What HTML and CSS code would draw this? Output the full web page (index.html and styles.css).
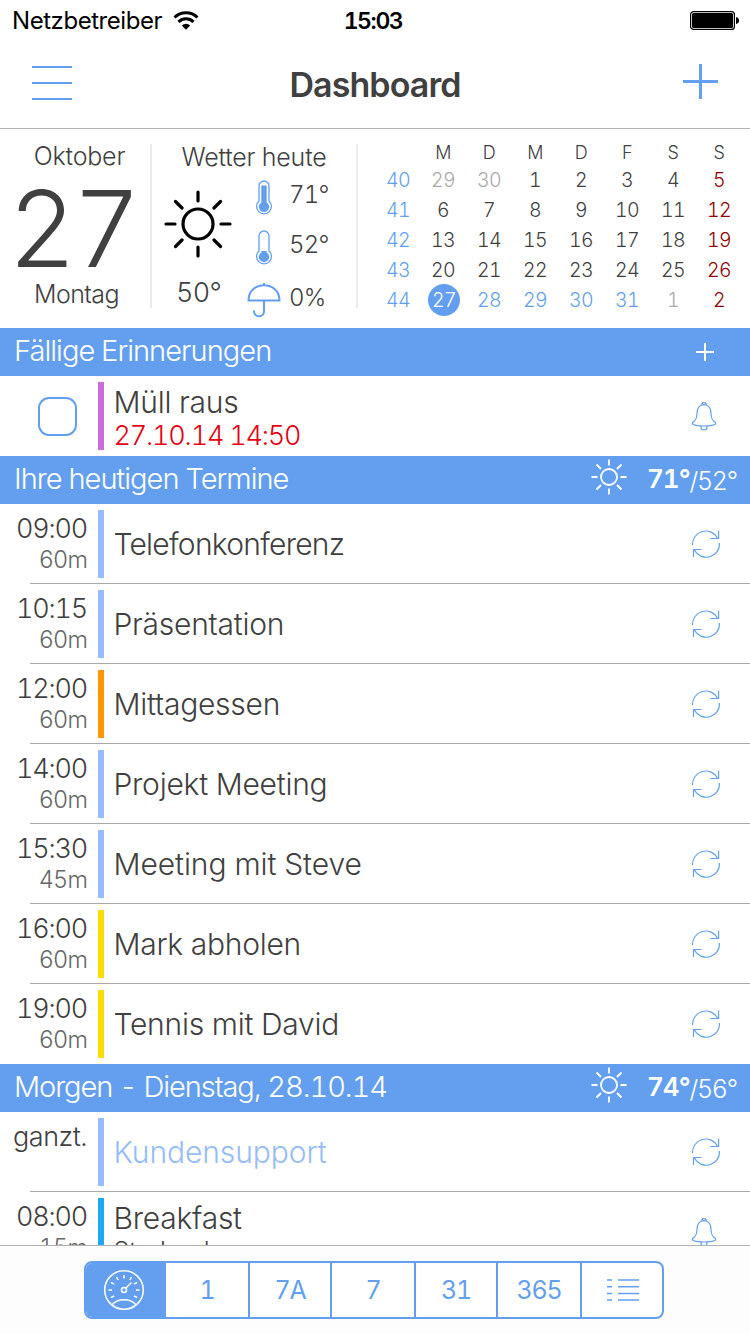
FILE: index.html
```html
<!DOCTYPE html>
<html lang="de">
<head>
    <meta charset="utf-8">
    <title>Dashboard</title>
    <link rel="stylesheet" href="styles.css">
</head>
<body>
    <svg class="symbols" width="0" height="0">
        <symbol id="repeat" viewBox="0 0 30 30">
            <path d="M1.5 16 A13.3 13.3 0 0 1 26.6 9.2 M27.6 1.5 V9.5 H19.5 M28.5 14 A13.3 13.3 0 0 1 3.4 21 M2.5 28 V20.5 H10.5"/>
        </symbol>
        <symbol id="bell" viewBox="0 0 26 30">
            <path d="M10.8 4 A2.2 2.4 0 0 1 15.2 4 C18.8 5.2 19.8 8.2 20 12 C20.2 17.5 21 19 23.5 20.8 C25.8 22.7 24.5 23.8 21 24.3 C16 25.2 10 25.2 5 24.3 C1.5 23.8 .2 22.7 2.5 20.8 C5 19 5.8 17.5 6 12 C6.2 8.2 7.2 5.2 10.8 4 Z M10 25 V26 A3 3 0 0 0 16 26 V25 M10.8 4 Q13 3.3 15.2 4"/>
        </symbol>
        <symbol id="sun" viewBox="0 0 36 36">
            <circle cx="18" cy="18" r="8"/>
            <path d="M18 .5V6.5M18 29.5V35.5M.5 18H6.5M29.5 18H35.5M5.5 5.5L10 10M26 26L30.5 30.5M5.5 30.5L10 26M26 10L30.5 5.5"/>
        </symbol>
    </svg>

    <div class="status-bar">
        <div class="carrier">
            <span>Netzbetreiber</span>
            <svg width="26" height="20" viewBox="0 0 26 20">
                <path d="M1.5 6.5 A16.5 16.5 0 0 1 24.5 6.5" fill="none" stroke="#000" stroke-width="3"/>
                <path d="M5.5 10.8 A10.8 10.8 0 0 1 20.5 10.8" fill="none" stroke="#000" stroke-width="3"/>
                <path d="M13 18.8 L8.8 14.5 A6 6 0 0 1 17.2 14.5 Z"/>
            </svg>
        </div>
        <span class="clock">15:03</span>
        <svg class="battery" width="50" height="20" viewBox="0 0 50 20">
            <rect x=".6" y=".6" width="43.8" height="17.8" rx="3" fill="none" stroke="#000" stroke-width="1.2"/>
            <rect x="2" y="2" width="41" height="15" rx="1.5"/>
            <path d="M46 6 Q49 6.5 49 9.5 Q49 12.5 46 13 Z"/>
        </svg>
    </div>

    <div class="nav-bar">
        <div class="menu"><i></i><i></i><i></i></div>
        <h1>Dashboard</h1>
        <svg class="add" width="36" height="36" viewBox="0 0 36 36">
            <path d="M18.5 0V35M1 17.5H36"/>
        </svg>
    </div>

    <div class="summary">
        <div class="today">
            <div class="month">Oktober</div>
            <div class="day">27</div>
            <div class="weekday">Montag</div>
        </div>
        <div class="weather">
            <div class="weather-title">Wetter heute</div>
            <div class="weather-body">
                <div class="now">
                    <svg width="68" height="68" viewBox="0 0 68 68">
                        <circle cx="34" cy="34" r="15"/>
                        <path d="M34 2V11M34 57V66M2 34H11M57 34H66M11.5 11.5L18 18M50 50L56.5 56.5M11.5 56.5L18 50M50 18L56.5 11.5"/>
                    </svg>
                    <span>50°</span>
                </div>
                <div class="details">
                    <div>
                        <svg width="34" height="36" viewBox="0 0 34 36">
                            <path class="line" d="M12 22V7A5 5 0 0 1 22 7V22A7.4 7.4 0 1 1 12 22Z"/>
                            <path class="fill" d="M14.3 23.5V6.5H19.7V23.5A5.2 5.2 0 1 1 14.3 23.5Z"/>
                        </svg>
                        <span>71°</span>
                    </div>
                    <div>
                        <svg width="34" height="36" viewBox="0 0 34 36">
                            <path class="line" d="M12 22V7A5 5 0 0 1 22 7V22A7.4 7.4 0 1 1 12 22Z"/>
                            <path class="fill" d="M14.3 23.5V22H19.7V23.5A5.2 5.2 0 1 1 14.3 23.5Z"/>
                        </svg>
                        <span>52°</span>
                    </div>
                    <div class="rain">
                        <svg width="34" height="36" viewBox="0 0 34 36">
                            <path class="umbrella" d="M17 1V3M1.5 18.5C1.5 -2 32.5 -2 32.5 18.5ZM17 18.5V29.5A5 4.7 0 0 1 7 29.5V28.5"/>
                        </svg>
                        <span>0%</span>
                    </div>
                </div>
            </div>
        </div>
        <table class="calendar">
            <tr><th></th><th>M</th><th>D</th><th>M</th><th>D</th><th>F</th><th>S</th><th>S</th></tr>
            <tr><td class="week">40</td><td class="gray">29</td><td class="gray">30</td><td>1</td><td>2</td><td>3</td><td>4</td><td class="red">5</td></tr>
            <tr><td class="week">41</td><td>6</td><td>7</td><td>8</td><td>9</td><td>10</td><td>11</td><td class="red">12</td></tr>
            <tr><td class="week">42</td><td>13</td><td>14</td><td>15</td><td>16</td><td>17</td><td>18</td><td class="red">19</td></tr>
            <tr><td class="week">43</td><td>20</td><td>21</td><td>22</td><td>23</td><td>24</td><td>25</td><td class="red">26</td></tr>
            <tr><td class="week">44</td><td><span class="current">27</span></td><td class="blue">28</td><td class="blue">29</td><td class="blue">30</td><td class="blue">31</td><td class="gray">1</td><td class="red">2</td></tr>
        </table>
    </div>

    <div class="list">
        <div class="section">
            <h2>Fällige Erinnerungen</h2>
            <svg class="section-add" width="20" height="20" viewBox="0 0 20 20"><path d="M10 1V19M1 10H19"/></svg>
        </div>
        <div class="row">
            <div class="check"><span></span></div>
            <div class="bar purple"></div>
            <div class="text two-lines"><div class="title">Müll raus</div><div class="due">27.10.14 14:50</div></div>
            <svg class="icon bell"><use href="#bell"/></svg>
        </div>

        <div class="section">
            <h2>Ihre heutigen Termine</h2>
            <svg class="sun"><use href="#sun"/></svg>
            <div class="temps"><b>71°</b><span>/52°</span></div>
        </div>
        <div class="row line">
            <div class="time">09:00<small>60m</small></div>
            <div class="bar lightblue"></div>
            <div class="text"><div class="title tight">Telefonkonferenz</div></div>
            <svg class="icon"><use href="#repeat"/></svg>
        </div>
        <div class="row line">
            <div class="time">10:15<small>60m</small></div>
            <div class="bar lightblue"></div>
            <div class="text"><div class="title">Präsentation</div></div>
            <svg class="icon"><use href="#repeat"/></svg>
        </div>
        <div class="row line">
            <div class="time">12:00<small>60m</small></div>
            <div class="bar orange"></div>
            <div class="text"><div class="title">Mittagessen</div></div>
            <svg class="icon"><use href="#repeat"/></svg>
        </div>
        <div class="row line">
            <div class="time">14:00<small>60m</small></div>
            <div class="bar lightblue"></div>
            <div class="text"><div class="title">Projekt Meeting</div></div>
            <svg class="icon"><use href="#repeat"/></svg>
        </div>
        <div class="row line">
            <div class="time">15:30<small>45m</small></div>
            <div class="bar lightblue"></div>
            <div class="text"><div class="title loose">Meeting mit Steve</div></div>
            <svg class="icon"><use href="#repeat"/></svg>
        </div>
        <div class="row line">
            <div class="time">16:00<small>60m</small></div>
            <div class="bar yellow"></div>
            <div class="text"><div class="title">Mark abholen</div></div>
            <svg class="icon"><use href="#repeat"/></svg>
        </div>
        <div class="row">
            <div class="time">19:00<small>60m</small></div>
            <div class="bar yellow"></div>
            <div class="text"><div class="title">Tennis mit David</div></div>
            <svg class="icon"><use href="#repeat"/></svg>
        </div>

        <div class="section">
            <h2 class="date">Morgen - Dienstag, 28.10.14</h2>
            <svg class="sun"><use href="#sun"/></svg>
            <div class="temps"><b>74°</b><span>/56°</span></div>
        </div>
        <div class="row line">
            <div class="time allday-label">ganzt.</div>
            <div class="bar lightblue"></div>
            <div class="text"><div class="title loose allday">Kundensupport</div></div>
            <svg class="icon"><use href="#repeat"/></svg>
        </div>
        <div class="row">
            <div class="time">08:00<small>15m</small></div>
            <div class="bar cyan"></div>
            <div class="text two-lines"><div class="title">Breakfast</div><div class="place">Starbucks</div></div>
            <svg class="icon bell"><use href="#bell"/></svg>
        </div>
    </div>

    <div class="tab-bar">
        <div class="tabs">
            <div class="tab active">
                <svg width="42" height="42" viewBox="0 0 42 42">
                    <circle cx="21" cy="21" r="19.3"/>
                    <circle cx="21" cy="21" r="2.5"/>
                    <path d="M23 19L28.5 13.5M21 6V9.5M13.5 8L15.2 11M28.5 8L26.8 11M8 13.5L11 15.2M34 13.5L31 15.2M5.5 21H9M33 21H36.5M8 28.5L11 26.8M34 28.5L31 26.8M9 36C14 29 28 29 33 36"/>
                </svg>
            </div>
            <div class="tab">1</div>
            <div class="tab">7A</div>
            <div class="tab">7</div>
            <div class="tab">31</div>
            <div class="tab">365</div>
            <div class="tab">
                <svg width="34" height="24" viewBox="0 0 34 24">
                    <path d="M2 2H7M13 2H34M2 8.7H7M13 8.7H34M2 15.4H7M13 15.4H34M2 22H7M13 22H34"/>
                </svg>
            </div>
        </div>
    </div>
</body>
</html>
```
FILE: styles.css
```css
* {
    box-sizing: border-box;
}

body, h1, h2 {
    margin: 0;
    padding: 0;
}

body {
    display: flex;
    flex-direction: column;
    width: 750px;
    height: 1334px;
    overflow: hidden;
    background-color: #fff;
    color: #404040;
    font-family: Inter, "Liberation Sans", sans-serif;
    font-weight: 300;
    font-variant-numeric: tabular-nums;
}

svg {
    display: block;
    flex: none;
}

.symbols {
    display: none;
}

.status-bar {
    display: grid;
    grid-template-columns: 1fr 66px 1fr;
    align-items: center;
    height: 40px;
    padding: 0 10px 0 12px;
    color: #000;
    font-size: 24px;
    line-height: 40px;
}

.carrier {
    display: flex;
    align-items: center;
    gap: 11px;
    font-weight: 400;
    letter-spacing: -0.45px;
}

.carrier span, .clock {
    padding-top: 1px;
}

.clock {
    padding-right: 6px;
    font-weight: 600;
    font-size: 23px;
    letter-spacing: -1.4px;
    text-align: center;
}

.battery {
    justify-self: end;
}

.nav-bar {
    display: flex;
    justify-content: space-between;
    align-items: center;
    height: 89px;
    padding: 0 32px 2px;
    border-bottom: 1px solid #b2b2b2;
}

.menu {
    display: flex;
    flex-direction: column;
    gap: 14px;
    width: 40px;
}

.menu i {
    height: 2px;
    background-color: #649fef;
}

.nav-bar h1 {
    padding: 2px 4px 0 0;
    font-size: 34px;
    font-weight: 600;
    letter-spacing: -0.9px;
}

.add {
    margin-bottom: 3px;
    fill: none;
    stroke: #649fef;
    stroke-width: 3;
}

.summary {
    display: flex;
    height: 199px;
    padding-top: 15px;
}

.today {
    width: 152px;
    height: 164px;
    border-right: 2px solid #ebebeb;
    text-align: center;
}

.month, .weekday, .weather-title {
    font-size: 25px;
    line-height: 24px;
    letter-spacing: -0.2px;
}

.month {
    padding-left: 9px;
}

.weekday {
    padding-left: 3px;
    letter-spacing: -0.6px;
}

.day {
    height: 114px;
    padding-right: 5px;
    font-size: 106px;
    font-weight: 300;
    line-height: 122px;
    letter-spacing: -4px;
}

.weather {
    width: 206px;
    height: 164px;
    border-right: 2px solid #ebebeb;
}

.weather-title {
    padding-top: 1px;
    text-align: center;
}

.weather-body {
    display: flex;
    padding-left: 12px;
}

.now {
    width: 76px;
    padding-top: 21px;
    font-size: 27px;
    line-height: 32px;
    letter-spacing: -0.7px;
}

.now svg {
    margin-bottom: 19px;
    fill: none;
    stroke: #000;
    stroke-width: 3.2;
    stroke-linecap: round;
}

.now span {
    padding-left: 12px;
}

.details {
    padding: 10px 0 0 7px;
    font-size: 24px;
}

.details div {
    display: flex;
    gap: 8px;
    height: 50px;
    line-height: 32px;
    letter-spacing: -0.8px;
}

.details .line, .details .umbrella {
    fill: none;
    stroke: #649fef;
    stroke-width: 1.3;
}

.details .umbrella {
    stroke-width: 2;
}

.details .fill {
    fill: #649fef;
}

.details .rain {
    padding-top: 3px;
}

.calendar {
    width: 368px;
    height: 174px;
    margin: -3px 0 0 16px;
    border-collapse: collapse;
    table-layout: fixed;
    font-size: 19.5px;
    letter-spacing: -0.6px;
}

.calendar th, .calendar td {
    height: 30px;
    padding: 0;
    font-weight: 300;
    line-height: 29px;
    text-align: center;
}

.calendar th {
    height: 24px;
    font-size: 18px;
    line-height: 24px;
}

.calendar .week {
    padding-left: 2px;
    color: #649fef;
}

.blue {
    color: #649fef;
}

.gray {
    color: #aaa;
}

.red {
    color: #900000;
}

.current {
    display: block;
    width: 32px;
    height: 32px;
    margin: -1px 0 -1px 8px;
    border-radius: 50%;
    background-color: #649fef;
    color: #fff;
    line-height: 32px;
}

.list {
    flex: 1;
    overflow: hidden;
}

.section {
    display: flex;
    align-items: center;
    height: 48px;
    padding-left: 14px;
    background-color: #649fef;
    color: #fff;
}

.section h2 {
    flex: 1;
    padding-bottom: 2px;
    font-size: 29px;
    font-weight: 300;
    line-height: 46px;
    letter-spacing: -0.95px;
}

.section h2.date {
    letter-spacing: -1.05px;
}

.section-add {
    margin-right: 35px;
    stroke: #fff;
    stroke-width: 2;
}

.sun {
    width: 36px;
    height: 36px;
    margin: -6px 20px 0 0;
    fill: none;
    stroke: #fff;
    stroke-width: 1.8;
}

.temps {
    display: flex;
    width: 103px;
    font-size: 25px;
    line-height: 46px;
    letter-spacing: -1.3px;
}

.temps b {
    font-size: 26px;
    font-weight: 600;
    letter-spacing: -1px;
}

.temps span {
    padding-top: 2px;
}

.row {
    display: flex;
    height: 80px;
    padding: 6px 29px 6px 0;
}

.row.line {
    background: linear-gradient(#a8a8a8, #a8a8a8) 30px 79px / 720px 1px no-repeat;
}

.time {
    width: 98px;
    padding: 3px 11px 0 0;
    font-size: 27px;
    line-height: 31px;
    letter-spacing: -1.2px;
    text-align: right;
}

.time small {
    display: block;
    padding-top: 1px;
    color: #666;
    font-size: 23.5px;
    line-height: 30px;
    letter-spacing: -0.9px;
}

.time.allday-label {
    letter-spacing: -0.5px;
}

.check {
    display: flex;
    width: 98px;
    padding: 15px 0 0 38px;
}

.check span {
    width: 39px;
    height: 39px;
    border: 2px solid #649fef;
    border-radius: 11px;
}

.bar {
    width: 6px;
    height: 68px;
}

.purple {
    background-color: #c76fdc;
}

.lightblue {
    background-color: #96bcfb;
}

.orange {
    background-color: #ff9500;
}

.yellow {
    background-color: #fddc00;
}

.cyan {
    background-color: #1eaaf1;
}

.text {
    display: flex;
    flex: 1;
    flex-direction: column;
    justify-content: center;
    padding-left: 9.5px;
}

.text.two-lines {
    padding-top: 2px;
}

.title {
    font-size: 30px;
    line-height: 36px;
    letter-spacing: -0.25px;
}

.title.tight {
    letter-spacing: -0.75px;
}

.title.loose {
    letter-spacing: -0.08px;
}

.title.allday {
    color: #96bcfb;
}

.due {
    color: #e60012;
    font-size: 27px;
    line-height: 31px;
    letter-spacing: -1.2px;
}

.place {
    font-size: 25px;
    line-height: 31px;
}

.icon {
    width: 30px;
    height: 30px;
    margin-top: 19px;
    fill: none;
    stroke: #649fef;
    stroke-width: 1.2;
}

.icon.bell {
    width: 26px;
    margin-right: 4px;
}

.tab-bar {
    height: 89px;
    padding: 15px 86px 0 84px;
    border-top: 1px solid #b2b2b2;
    background-color: #fdfdfd;
}

.tabs {
    display: flex;
    height: 58px;
    overflow: hidden;
    border: 2px solid #649fef;
    border-radius: 8px;
    background-color: #fff;
}

.tab {
    display: flex;
    justify-content: center;
    align-items: center;
    width: 82px;
    border-left: 2px solid #649fef;
    color: #649fef;
    font-size: 25px;
    font-weight: 400;
    letter-spacing: -1.2px;
}

.tab:nth-child(even) {
    width: 84px;
}

.tab.active {
    width: 78px;
    padding-right: 2px;
    border-left: 0;
    background-color: #649fef;
}

.tab svg {
    fill: none;
    stroke: #649fef;
    stroke-width: 1.5;
}

.tab.active svg {
    stroke: #fff;
}
```
